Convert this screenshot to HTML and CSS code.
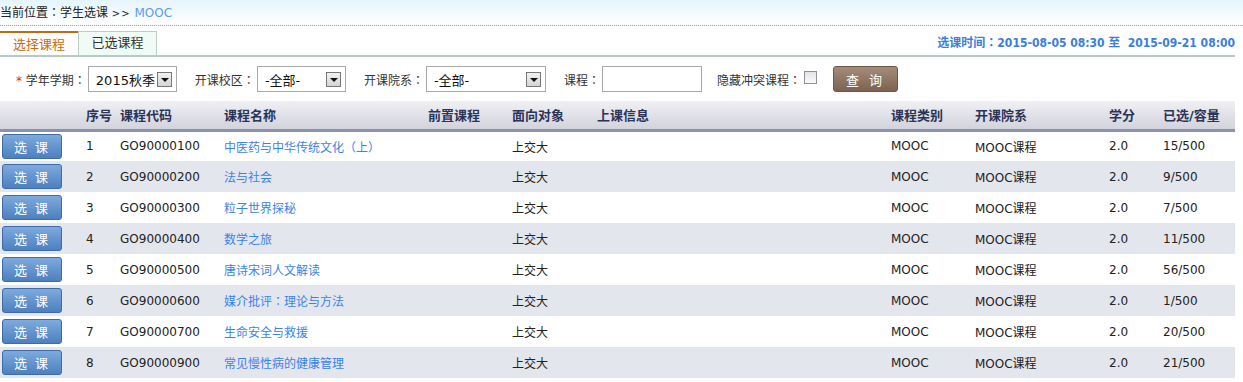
FILE: index.html
```html
<!DOCTYPE html>
<html lang="zh-CN">

<head>
    <meta charset="utf-8">
    <title>学生选课</title>
    <link rel="stylesheet" href="styles.css">
</head>

<body>
    <div class="crumb">当前位置<span class="colon" lang="zh-TW">：</span>学生选课 <span class="sep">&gt;&gt;</span> <span class="crumb-cur">MOOC</span></div>

    <div class="tabbar">
        <div class="tabs">
            <div class="tab active">选择课程</div>
            <div class="tab">已选课程</div>
        </div>
        <div class="period">选课时间<span class="colon" lang="zh-TW">：</span>2015-08-05 08:30 至&nbsp; 2015-09-21 08:00</div>
    </div>

    <div class="filters">
        <span class="label"><span class="star">*</span> 学年学期<span class="colon" lang="zh-TW">：</span></span>
        <div class="fake-select w88"><span>2015秋季</span><i class="arrow"></i></div>
        <span class="label">开课校区<span class="colon" lang="zh-TW">：</span></span>
        <div class="fake-select w89"><span>-全部-</span><i class="arrow"></i></div>
        <span class="label">开课院系<span class="colon" lang="zh-TW">：</span></span>
        <div class="fake-select w119"><span>-全部-</span><i class="arrow"></i></div>
        <span class="label">课程<span class="colon" lang="zh-TW">：</span></span>
        <input type="text" class="text-input">
        <span class="label">隐藏冲突课程<span class="colon" lang="zh-TW">：</span></span>
        <span class="checkbox"></span>
        <button class="query-btn">查 询</button>
    </div>

    <table class="course-table">
        <thead>
            <tr>
                <th class="c-btn"></th>
                <th class="c-no">序号</th>
                <th class="c-code">课程代码</th>
                <th class="c-name">课程名称</th>
                <th class="c-pre">前置课程</th>
                <th class="c-target">面向对象</th>
                <th class="c-info">上课信息</th>
                <th class="c-type">课程类别</th>
                <th class="c-dept">开课院系</th>
                <th class="c-credit">学分</th>
                <th class="c-cap">已选/容量</th>
            </tr>
        </thead>
        <tbody id="rows"></tbody>
    </table>

    <script>
        const courses = [
            ['GO90000100', '中医药与中华传统文化（上）', '15/500'],
            ['GO90000200', '法与社会', '9/500'],
            ['GO90000300', '粒子世界探秘', '7/500'],
            ['GO90000400', '数学之旅', '11/500'],
            ['GO90000500', '唐诗宋词人文解读', '56/500'],
            ['GO90000600', '媒介批评：理论与方法', '1/500'],
            ['GO90000700', '生命安全与救援', '20/500'],
            ['GO90000900', '常见慢性病的健康管理', '21/500']
        ];

        const rows = document.getElementById('rows');
        courses.forEach(function (c, i) {
            const name = c[1].replace('：', '<span class="colon" lang="zh-TW">：</span>');
            const tr = document.createElement('tr');
            tr.innerHTML = `
                <td><button class="pick-btn">选 课</button></td>
                <td>${i + 1}</td>
                <td>${c[0]}</td>
                <td><a href="#" class="course-link">${name}</a></td>
                <td></td>
                <td>上交大</td>
                <td></td>
                <td>MOOC</td>
                <td>MOOC课程</td>
                <td>2.0</td>
                <td>${c[2]}</td>`;
            rows.appendChild(tr);
        });
    </script>
</body>

</html>
```

FILE: styles.css
```css
* {
    margin: 0;
    padding: 0;
    box-sizing: border-box;
}

body {
    font-family: "DejaVu Sans", "Noto Sans CJK TC", sans-serif;
    font-size: 12px;
    color: #222;
    background: #ffffff;
    width: 1243px;
    overflow: hidden;
}

.colon {
    font-family: "Noto Sans CJK TC", sans-serif;
}

.crumb {
    height: 26px;
    line-height: 24px;
    background: linear-gradient(to bottom, #e6f5fd, #ffffff);
    border-bottom: 1px dotted #aaaaaa;
    color: #222;
}

.crumb .sep {
    font-size: 10px;
    letter-spacing: 1px;
}

.crumb-cur {
    color: #5b9bf0;
}

.tabbar {
    width: 1235px;
    margin-top: 5px;
    display: flex;
    justify-content: space-between;
    align-items: flex-end;
    border-bottom: 2px solid #b3ccc6;
}

.tabs {
    display: flex;
}

.tab {
    width: 79px;
    height: 24px;
    line-height: 22px;
    text-align: center;
    font-size: 13px;
    color: #333;
    background: #f0fbf6;
    border: 1px solid #b8d0c8;
    border-bottom: none;
}

.tab.active {
    width: 78px;
    color: #cc6a12;
    background: #ffffff;
    border: none;
    border-top: 2px solid #c8680e;
    line-height: 24px;
}

.period {
    color: #3a7ee0;
    font-weight: bold;
    font-stretch: condensed;
    padding-bottom: 5px;
}

.filters {
    display: flex;
    align-items: center;
    height: 26px;
    margin-top: 9px;
    padding-left: 16px;
}

.label {
    color: #333;
    margin-right: 2px;
}

.star {
    color: #d03030;
}

.fake-select {
    height: 26px;
    border: 1px solid #a9a9a9;
    background: #fff;
    display: flex;
    align-items: center;
    justify-content: space-between;
    padding: 0 4px 0 7px;
    margin-right: 18px;
    font-size: 13px;
    color: #111;
}

.w88 {
    width: 89px;
}

.w89 {
    width: 89px;
}

.w119 {
    width: 120px;
}

.arrow {
    width: 15px;
    height: 15px;
    border: 1px solid #777;
    background: linear-gradient(to bottom, #f2f2f2, #d4d4d4);
    position: relative;
}

.arrow::after {
    content: "";
    position: absolute;
    left: 3px;
    top: 5px;
    border-left: 4px solid transparent;
    border-right: 4px solid transparent;
    border-top: 4px solid #111;
}

.text-input {
    width: 100px;
    height: 26px;
    border: 1px solid #a9a9a9;
    margin-right: 15px;
    outline: none;
}

.checkbox {
    width: 13px;
    height: 13px;
    border: 1px solid #8f8f9d;
    background: linear-gradient(to bottom, #e4e4e4, #fafafa);
    margin-left: 1px;
    margin-right: 16px;
    margin-top: -4px;
}

.query-btn {
    width: 65px;
    height: 26px;
    border: 1px solid #6e5646;
    border-radius: 3px;
    background: linear-gradient(to bottom, #a38c79, #7d6350);
    color: #fff;
    font-family: inherit;
    font-size: 13px;
    letter-spacing: 3px;
}

.course-table {
    width: 1235px;
    margin-top: 9px;
    border-collapse: collapse;
}

.course-table th {
    height: 29px;
    text-align: left;
    font-size: 13px;
    font-weight: bold;
    color: #2a3358;
    background: linear-gradient(to bottom, #f0f0f4, #d2d3dc);
    border-bottom: 3px solid #8a93ad;
    padding: 0;
}

.course-table td {
    height: 31px;
    padding: 0;
    color: #222;
}

.course-table tbody tr:nth-child(even) td {
    background: #e4e6ee;
}

.c-btn { width: 86px; }
.c-no { width: 34px; }
.c-code { width: 104px; }
.c-name { width: 204px; }
.c-pre { width: 84px; }
.c-target { width: 85px; }
.c-info { width: 294px; }
.c-type { width: 84px; }
.c-dept { width: 134px; }
.c-credit { width: 54px; }

.pick-btn {
    width: 60px;
    height: 25px;
    margin-left: 2px;
    border: 1px solid #3d6ca8;
    border-radius: 3px;
    background: linear-gradient(to bottom, #7eaadd, #4d80c0);
    color: #fff;
    font-family: inherit;
    font-size: 13px;
    letter-spacing: 2px;
}

.course-link {
    color: #3a82f0;
    text-decoration: none;
}
```
